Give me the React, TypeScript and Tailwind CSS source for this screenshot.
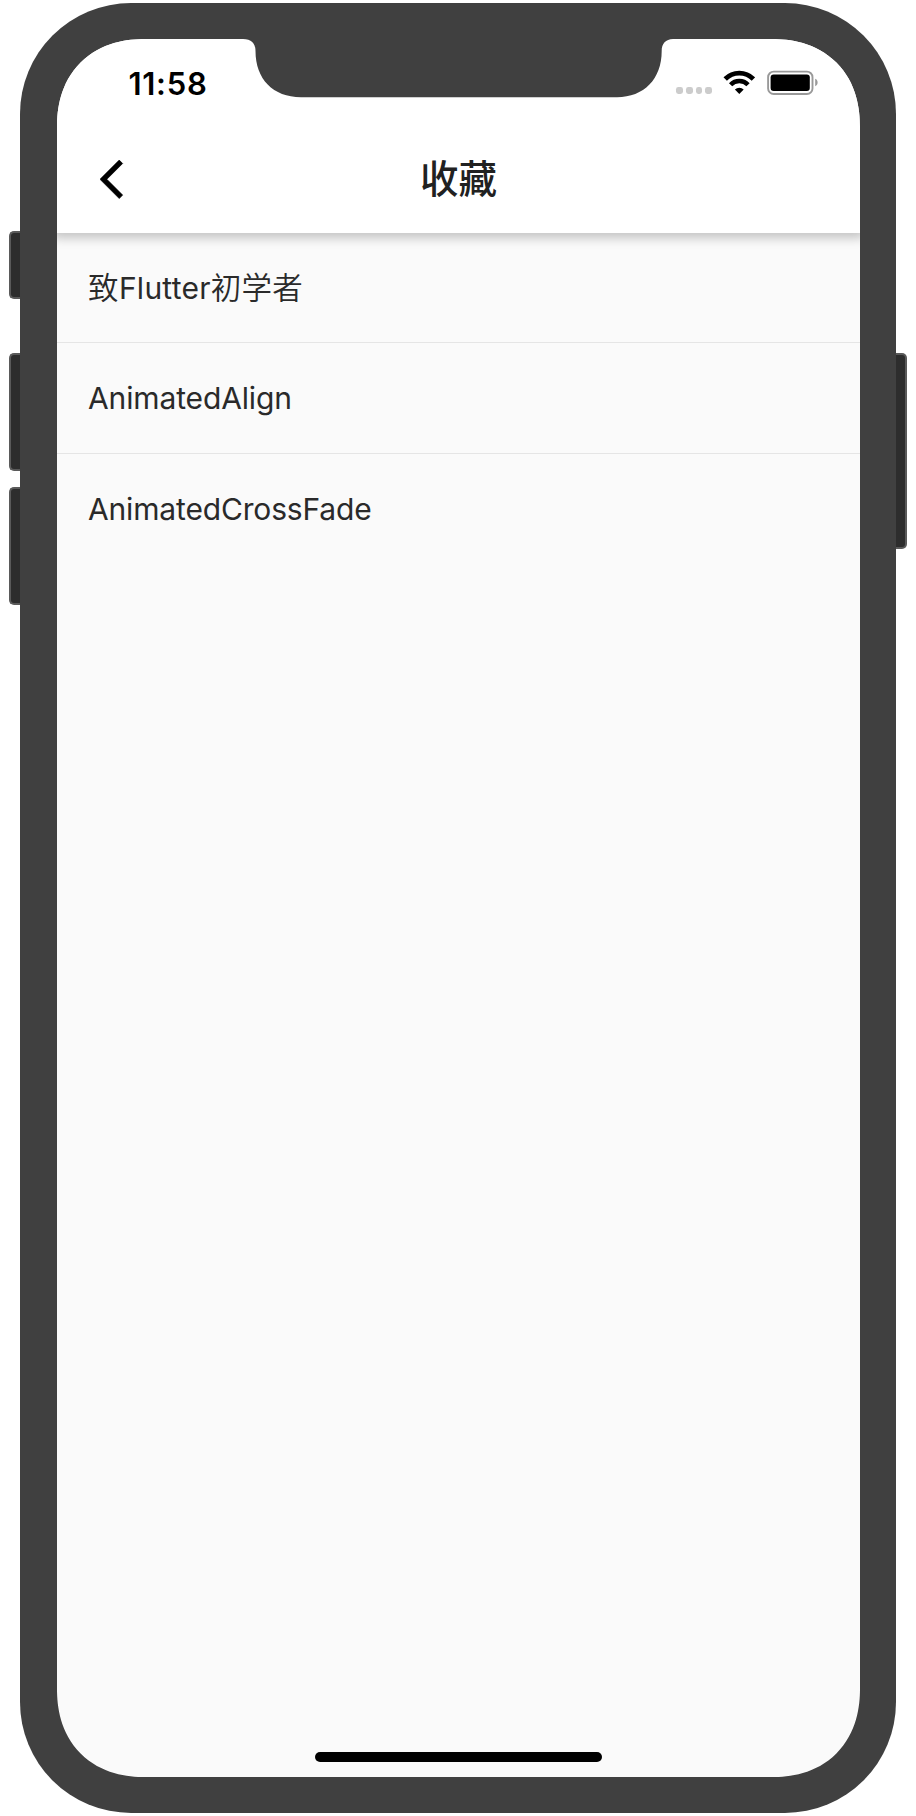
const items = [
  [
    { text: "致", style: "text-[30.5px] font-[350] tracking-[0.4px]" },
    { text: "Flutter", style: "tracking-[0.25px]" },
    { text: "初学者", style: "text-[30.5px] font-[350] tracking-[0.2px]" },
  ],
  [{ text: "AnimatedAlign", style: "tracking-[-0.13px]" }],
  [{ text: "AnimatedCrossFade", style: "tracking-[-0.16px]" }],
];

function Notch() {
  return (
    <svg
      className="absolute left-[186px] top-0"
      width="430"
      height="59"
      viewBox="243 39 430 59"
      fill="#404040"
      aria-hidden="true"
    >
      <path d="M243 39C251 39 255.5 43 255.5 51C255.5 79 273 97.2 301 97.2H617C644 97.2 661.7 79 661.7 51C661.7 43 666 39 674 39Z" />
    </svg>
  );
}

function StatusBar() {
  return (
    <div className="flex h-[87px] items-start justify-between pl-[71.5px] pr-[41px] pt-[31px]">
      <span className="text-[31px] font-semibold leading-[27px] tracking-[0.7px] text-black">
        11:58
      </span>
      <div className="flex items-start">
        <div className="mt-[17px] flex gap-[2.9px]">
          <i className="size-[6.8px] rounded-[2.4px] bg-[#cccccc]" />
          <i className="size-[6.8px] rounded-[2.4px] bg-[#cccccc]" />
          <i className="size-[6.8px] rounded-[2.4px] bg-[#cccccc]" />
          <i className="size-[6.8px] rounded-[2.4px] bg-[#cccccc]" />
        </div>
        <svg className="ml-[11px]" width="32" height="25" viewBox="723 70 32 25" fill="none" aria-hidden="true">
          <path d="M725.2 79A19.8 19.8 0 0 1 753.4 79" stroke="#000" strokeWidth="4.8" />
          <path d="M730.6 84.8A12 12 0 0 1 748 84.8" stroke="#000" strokeWidth="4.5" />
          <path d="M734.9 89.4A6.4 6.4 0 0 1 743.7 89.4L739.3 94Z" fill="#000" />
        </svg>
        <svg className="ml-[12px]" width="52" height="25" viewBox="767 70 52 25" fill="none" aria-hidden="true">
          <rect x="768.1" y="71.6" width="44.4" height="22.4" rx="5.6" stroke="#999" strokeWidth="1.9" />
          <rect x="770.6" y="74.5" width="39.2" height="16.4" rx="3" fill="#000" />
          <path d="M815.2 78.8C818.4 79.8 818.4 85.2 815.2 86.2Z" fill="#999" />
        </svg>
      </div>
    </div>
  );
}

export default function App() {
  return (
    <div className="flex h-[1816px] w-[916px] justify-center bg-white pt-[3px] font-['Inter','Noto_Sans_CJK_SC',sans-serif]">
      <div className="flex w-[11px] flex-col pt-[228px]">
        <div className="h-[68px] rounded-l-[5px] border-2 border-r-0 border-[#5a5a5a] bg-[#2d2d2d]" />
        <div className="mt-[54px] h-[118px] rounded-l-[5px] border-2 border-r-0 border-[#5a5a5a] bg-[#2d2d2d]" />
        <div className="mt-[16px] h-[118px] rounded-l-[5px] border-2 border-r-0 border-[#5a5a5a] bg-[#2d2d2d]" />
      </div>
      <div className="h-[1810px] w-[876px] rounded-[111px] bg-[#404040] pb-[36px] pl-[37px] pr-[36px] pt-[36px]">
        <div className="relative flex h-[1738px] flex-col overflow-hidden rounded-[88px] bg-[#fafafa] [corner-shape:superellipse(1.15)]">
          <header className="h-[194px] shrink-0 bg-white shadow-[0_1px_10px_4px_rgba(0,0,0,0.22)]">
            <StatusBar />
            <div className="grid h-[107px] grid-cols-3 pt-[29px]">
              <svg className="ml-[43px] mt-[0.5px]" width="46.6" height="46.6" viewBox="0 0 24 24" aria-label="Back">
                <path
                  d="M11.67 3.87 9.9 2.1 0 12l9.9 9.9 1.77-1.77L3.54 12z"
                  stroke="#000"
                  strokeWidth="0.35"
                />
              </svg>
              <h1 className="text-center text-[38.5px] font-medium leading-[48px] text-[#212121]">收藏</h1>
              <span />
            </div>
          </header>
          <ul className="text-[30px] text-[#2a2a2a]">
            {items.map((parts, i) => (
              <li
                key={i}
                className="flex h-[111px] items-center whitespace-nowrap border-b border-[#e5e5e5] pl-[31px] leading-[40px] first:h-[110px] last:h-[109px] last:border-b-0"
              >
                {parts.map((p) => (
                  <span key={p.text} className={p.style}>
                    {p.text}
                  </span>
                ))}
              </li>
            ))}
          </ul>
          <div className="mx-auto mb-[15px] mt-auto h-[10.5px] w-[287px] rounded-full bg-black" />
          <Notch />
        </div>
      </div>
      <div className="w-[11px] pt-[350px]">
        <div className="h-[196px] rounded-r-[5px] border-2 border-l-0 border-[#5a5a5a] bg-[#2d2d2d]" />
      </div>
    </div>
  );
}
